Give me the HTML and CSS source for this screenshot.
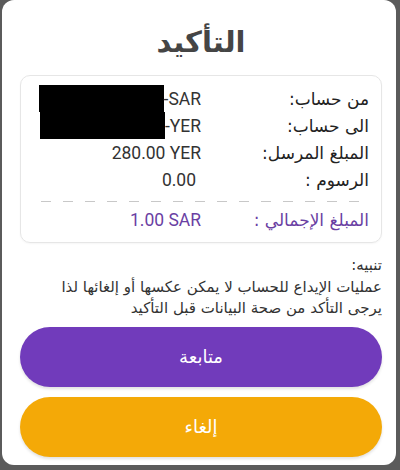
FILE: index.html
```html
<!DOCTYPE html>
<html lang="ar" dir="rtl">
<head>
<meta charset="utf-8">
<link rel="stylesheet" href="styles.css">
</head>
<body>
<div class="dialog">
  <h1 class="title">التأكيد</h1>
  <div class="card">
    <div class="row">
      <div class="label">من حساب:</div>
      <div class="value"><span class="redact"></span>-SAR</div>
    </div>
    <div class="row">
      <div class="label">الى حساب:</div>
      <div class="value"><span class="redact"></span>-YER</div>
    </div>
    <div class="row">
      <div class="label">المبلغ المرسل:</div>
      <div class="value">280.00 YER</div>
    </div>
    <div class="row">
      <div class="label">الرسوم :</div>
      <div class="value value-fee">0.00</div>
    </div>
    <div class="dash"></div>
    <div class="row total">
      <div class="label">المبلغ الإجمالي :</div>
      <div class="value">1.00 SAR</div>
    </div>
  </div>
  <div class="notice">
    <div>تنبيه:</div>
    <div>عمليات الإيداع للحساب لا يمكن عكسها أو إلغائها لذا</div>
    <div>يرجى التأكد من صحة البيانات قبل التأكيد</div>
  </div>
  <div class="actions">
    <button class="btn btn-primary">متابعة</button>
    <button class="btn btn-cancel">إلغاء</button>
  </div>
</div>
</body>
</html>
```

FILE: styles.css
```css
html, body {
  margin: 0;
  padding: 0;
  background: #5b5b5b;
}
body {
  width: 400px;
  height: 470px;
  overflow: hidden;
  font-family: "DejaVu Sans", sans-serif;
}
.dialog {
  box-sizing: border-box;
  margin: 0 4px 0 2px;
  width: 394px;
  height: 465px;
  background: #fff;
  border-radius: 12px;
  padding: 22px 14px 0 18px;
  display: flex;
  flex-direction: column;
}
.title {
  margin: 0;
  text-align: center;
  font-size: 29px;
  line-height: 40px;
  font-weight: bold;
  color: #454545;
}
.card {
  margin-top: 13px;
  border: 1px solid #e6e6e6;
  border-radius: 10px;
  padding: 9px 12px 9px 11px;
  box-shadow: 0 1px 2px rgba(0,0,0,0.04);
}
.row {
  display: grid;
  grid-template-columns: 168px 1fr;
  height: 27px;
  align-items: center;
}
.label {
  font-size: 17px;
  color: #222;
  white-space: nowrap;
}
.value {
  direction: ltr;
  text-align: right;
  font-family: Roboto, "DejaVu Sans", sans-serif;
  font-size: 17.5px;
  color: #333;
  display: flex;
  justify-content: flex-end;
  align-items: center;
  height: 27px;
}
.value-fee {
  padding-right: 5px;
}
.redact {
  display: inline-block;
  width: 125px;
  height: 27px;
  background: #000;
}
.dash {
  height: 1px;
  margin: 8px 0 4px 0;
  background: repeating-linear-gradient(to left, #c8c8c8 0 10px, transparent 10px 22px);
  margin-right: 10px;
}
.total .label, .total .value {
  color: #6a3fa3;
}
.notice {
  margin-top: 12px;
  font-size: 15px;
  line-height: 21.5px;
  color: #333;
  text-align: right;
}
.actions {
  margin-top: 7px;
  display: flex;
  flex-direction: column;
  gap: 10px;
}
.btn {
  height: 60px;
  border: none;
  border-radius: 30px;
  color: #fff;
  font-family: "DejaVu Sans", sans-serif;
  font-size: 18px;
  box-shadow: 0 2px 3px rgba(0,0,0,0.12);
}
.btn-primary {
  background: #713bbb;
}
.btn-cancel {
  background: #f4a907;
}
```
